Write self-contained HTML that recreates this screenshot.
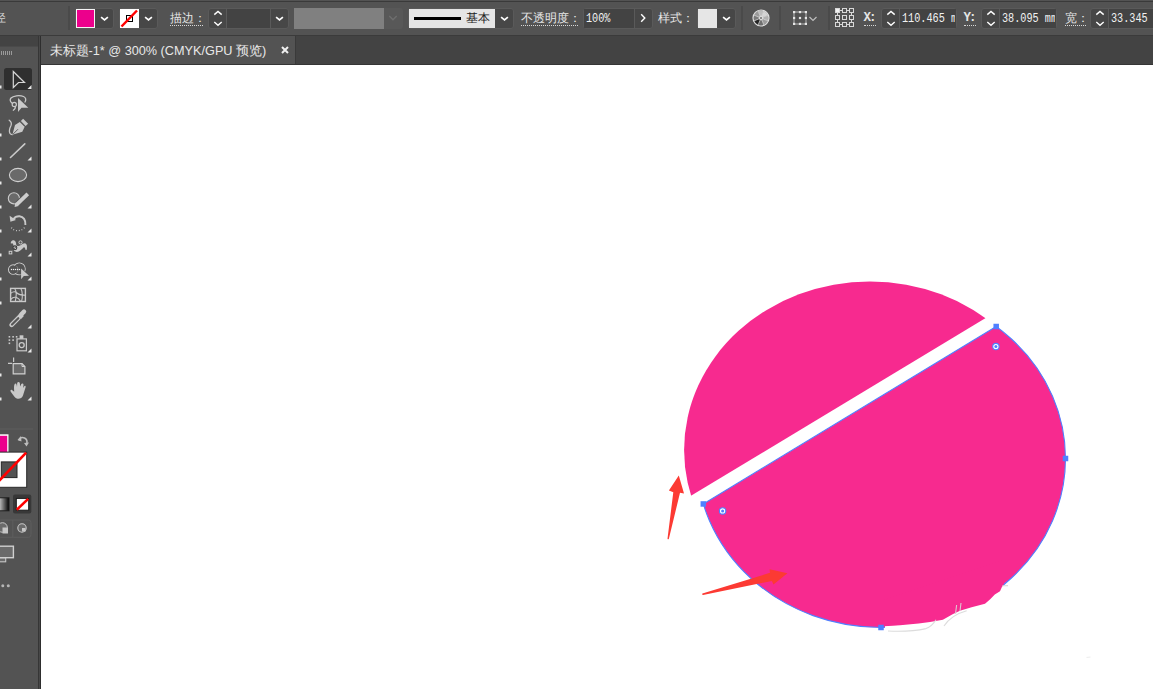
<!DOCTYPE html>
<html><head><meta charset="utf-8">
<style>
*{margin:0;padding:0;box-sizing:border-box}
html,body{width:1153px;height:689px;overflow:hidden;background:#535353;font-family:"Liberation Sans",sans-serif}
.a{position:absolute}
#top{left:0;top:0;width:1153px;height:35px;background:#535353}
#topdark{left:0;top:1px;width:1153px;height:1px;background:#3a3a3a}
#topline{left:0;top:35px;width:1153px;height:1px;background:#3b3b3b}
#tabbar{left:41px;top:36px;width:1112px;height:28px;background:#434343}
#tab{left:40px;top:36px;width:256px;height:28px;background:#535353;border-right:1px solid #3a3a3a}
#tool{left:0;top:36px;width:38px;height:653px;background:#535353}
#toolhead{left:0;top:36px;width:38px;height:11px;background:#434343;border-bottom:1px solid #4a4a4a}
#toolsep{left:38px;top:36px;width:3px;height:653px;background:linear-gradient(90deg,#363636 0,#363636 1px,#484848 1px,#484848 2px,#2e2e2e 2px)}
#canvas{left:41px;top:65px;width:1112px;height:624px;background:#fff}
#tabline{left:41px;top:64px;width:1112px;height:1px;background:#353535}
.sep{width:2px;height:24px;top:6px;background:#4a4a4a}
.box{background:#474747;border:1px solid #5a5a5a;border-radius:3px}
.lbl{color:#e6e6e6;font-size:12px;line-height:14px;top:11px;white-space:nowrap}
.ul{border-bottom:1px dotted #d8d8d8}
.txt{color:#f2f2f2;font-size:12.5px;transform:scaleX(0.815);transform-origin:0 0;white-space:nowrap;font-family:"Liberation Mono",monospace}
svg{position:absolute;overflow:visible}
</style></head><body>
<div id="top" class="a"></div>
<div id="topdark" class="a"></div>
<div id="topline" class="a"></div>
<div id="tabbar" class="a"></div>
<div id="tab" class="a"></div>
<div id="tool" class="a"></div>
<div id="toolhead" class="a"></div>
<div id="toolsep" class="a"></div>
<div id="canvas" class="a"></div>
<div id="tabline" class="a"></div>


<!-- toolbar -->
<svg style="left:0;top:0" width="41" height="689" viewBox="0 0 41 689">
<g fill="#9a9a9a">
<rect x="1" y="51" width="1" height="4"/><rect x="3" y="51" width="1" height="4"/><rect x="5" y="51" width="1" height="4"/><rect x="7" y="51" width="1" height="4"/><rect x="9" y="51" width="1" height="4"/><rect x="11" y="51" width="1" height="4"/>
</g>
<rect x="4" y="68" width="28" height="22" rx="2.5" fill="#2f2f2f"/>
<path d="M13.3,71.5 L24.5,82.5 L18.5,82.5 L13.3,87.5 Z" fill="none" stroke="#d6d6d6" stroke-width="1.2" stroke-linejoin="miter"/>
<g fill="#e8e8e8">
<path d="M31.5,85 L31.5,89 L27.5,89 Z"/>
<path d="M31.5,156.5 L31.5,160.5 L27.5,160.5 Z"/>
<path d="M31.5,204.5 L31.5,208.5 L27.5,208.5 Z"/>
<path d="M31.5,228.5 L31.5,232.5 L27.5,232.5 Z"/>
<path d="M31.5,252.5 L31.5,256.5 L27.5,256.5 Z"/>
<path d="M31.5,276.5 L31.5,280.5 L27.5,280.5 Z"/>
<path d="M31.5,324.5 L31.5,328.5 L27.5,328.5 Z"/>
<path d="M31.5,348.5 L31.5,352.5 L27.5,352.5 Z"/>
<path d="M31.5,396.5 L31.5,400.5 L27.5,400.5 Z"/>
<rect x="0" y="85.5" width="1.5" height="3"/><rect x="0" y="133.5" width="1.5" height="3"/><rect x="0" y="157.5" width="1.5" height="3"/><rect x="0" y="181.5" width="1.5" height="3"/><rect x="0" y="205.5" width="1.5" height="3"/><rect x="0" y="229.5" width="1.5" height="3"/><rect x="0" y="253.5" width="1.5" height="3"/><rect x="0" y="277.5" width="1.5" height="3"/><rect x="0" y="301.5" width="1.5" height="3"/><rect x="0" y="373.5" width="1.5" height="3"/><rect x="0" y="397.5" width="1.5" height="3"/>
</g>
<g fill="none" stroke="#c9c9c9" stroke-width="1.3" stroke-linecap="round">
<!-- lasso -->
<path d="M12.2,103.2 C10,101.5 9.6,99.5 11,98 C13,95.8 19.5,94.8 23.5,96.5 C26,97.6 26.3,100 25,102"/>
<circle cx="14.3" cy="104.4" r="2.1" stroke-width="1.2"/>
<path d="M15.2,106.4 C15.6,108 14.8,109.3 13.3,110.2"/>
<!-- pen curve -->
<path d="M9.2,120.2 C11,121.5 12,123 11,125.5 C9.5,128.5 8.6,131 10,133.4 C10.6,134.3 11.3,134.6 12.2,134.7"/>
<!-- line -->
<path d="M10.5,157.5 L24.8,143.8" stroke-width="1.6"/>
<!-- rotate -->
<path d="M13.5,219.2 C15,217 17.5,216.2 19.5,216.3 C23.5,216.6 25.8,220 25.4,225" stroke-width="1.9" stroke-linecap="butt"/>
<path d="M24.5,227.6 C22,230.4 18.5,231.3 15,230.3 C13,229.7 11.8,228.4 11,226.9" stroke-dasharray="0.9 1.9" stroke-width="1.3" stroke-linecap="butt"/>
<!-- puppet pin line -->
<!-- eyedropper tube -->

<!-- mesh -->
<rect x="10.6" y="288.4" width="14.8" height="13.1" stroke-width="1.4" stroke-linecap="butt"/>
<path d="M14.7,288.5 C16.5,291 16.5,296 15.3,301.3 M20.8,288.5 C22.5,291 22.8,297 21.6,301.3 M10.6,293.4 C13,291.5 15.5,291.5 17,293 C18.5,294.5 20.5,295 25.3,295.3 M10.6,299.5 C12.5,297.5 15,297 16.5,297.6 C18,298.2 19.5,299.5 20.5,301.3" stroke-width="1.1"/>
<!-- sprayer can -->
<rect x="17" y="338.9" width="9.4" height="11.9" stroke-width="1.2" stroke-linecap="butt"/>
<circle cx="21.7" cy="345.1" r="2.5" stroke-width="1.3"/>
<!-- artboard -->
<path d="M13.6,357.5 V362 M8,363.4 H12" stroke-width="1.2" stroke-linecap="butt"/>

</g>
<g fill="#c9c9c9">
<path d="M18,98 L28.3,107.8 L21.5,107.8 L18,112 Z"/>
<path d="M12.4,134.8 L15,125 L20.2,121.7 L24.8,126.4 L22.3,131.8 Z"/>
<path d="M20.9,121 L23.1,118.8 L28.1,123.8 L25.6,126.1 Z"/>
<path d="M9.6,215.8 L10.4,221.8 L16,220 Z"/>
<path d="M10.8,243.6 C10.5,241.3 12,240 13.6,240.2 C15.4,240.5 16.3,242.5 16.2,244.8 C17,246.3 18.8,246.3 20.5,245.3 C22.3,244.2 23.8,243.2 25.3,243.4 C27,243.7 27.3,246.5 26.8,249.8 L25.6,250 C25.2,248.3 24.7,247 23.8,247.3 C22,249.3 19.5,251.9 16.8,251.9 C14.6,251.9 13.2,250.6 13.4,248.3 C13.6,246.2 13.6,244.3 12.6,243.4 C12,243 11.4,243.4 10.8,243.6 Z"/>


<rect x="8.6" y="336" width="1.6" height="1.6"/><rect x="12.3" y="336" width="1.6" height="1.6"/><rect x="15.8" y="336" width="1.6" height="1.6"/>
<rect x="8.6" y="339.3" width="1.6" height="1.6"/><rect x="12.3" y="339.3" width="1.6" height="1.6"/>
<rect x="8.6" y="342.5" width="1.6" height="1.6"/>
<rect x="19.6" y="335.3" width="3.8" height="3.6"/>
<path d="M14,388 C14,385 14.6,383.5 15.5,383.5 C16.4,383.5 16.8,385 17,387 L17.2,383 C17.5,381.8 19.5,381.8 19.8,383 L20.2,386.5 L21.3,384 C21.8,383 23.5,383.3 23.5,384.5 L23.2,388 L24.2,386.3 C24.8,385.3 26,385.8 25.6,387.2 L23,395.5 C22,398 20,399 17.5,398.7 C15.5,398.5 14.5,397 13.5,395.5 L10.6,391.5 C10,390.5 11,389.5 12,390 L14.2,391.8 Z"/>
</g>
<path d="M13.2,363.6 H22 L24.9,366.5 V373.9 H13.2 Z" fill="#6a6a6a" stroke="#cfcfcf" stroke-width="1.2"/>
<path d="M22,363.6 V366.5 H24.9" fill="none" stroke="#cfcfcf" stroke-width="1"/>
<path d="M11.6,324.9 L18.8,317.7" stroke="#c9c9c9" stroke-width="4.6" stroke-linecap="round"/>
<path d="M12,324.5 L18.3,318.2" stroke="#575757" stroke-width="2.2" stroke-linecap="round"/>
<path d="M17.6,315.4 L20.4,312.6 L23.9,316.1 L21.1,318.9 Z" fill="#c9c9c9"/>
<path d="M21.4,314.2 L24,311.6" stroke="#c9c9c9" stroke-width="4.4" stroke-linecap="round"/>
<ellipse cx="18" cy="175" rx="8.6" ry="6.6" fill="#6a6a6a" stroke="#d0d0d0" stroke-width="1.1"/>
<circle cx="13.9" cy="198.3" r="5.6" fill="#6a6a6a" stroke="#cbcbcb" stroke-width="1.1"/>
<path d="M16.3,205 L27.8,193.8" stroke="#535353" stroke-width="5.8"/>
<path d="M16.6,204.7 L27.8,193.8" stroke="#cdcdcd" stroke-width="3.8"/>
<path d="M14.6,207 L15.2,202.6 L18.6,205.9 Z" fill="#cdcdcd"/>
<path d="M10.6,252.4 L20.4,242.6" stroke="#c9c9c9" stroke-width="1"/>
<path d="M11.5,251.5 L19.5,243.5" stroke="#444" stroke-width="0.8"/>
<g fill="#555" stroke="#cdcdcd" stroke-width="1">
<circle cx="20.5" cy="242.4" r="1.6"/>
<circle cx="14.9" cy="247.8" r="1.9" fill="#cdcdcd" stroke="#3a3a3a" stroke-width="1.1"/>
<rect x="9.2" y="251.3" width="2.6" height="2.6"/>
</g>
<path d="M13.6,249.1 L16.2,246.5" stroke="#3a3a3a" stroke-width="0.9"/>
<path d="M12.9,134.3 L18,129.2" stroke="#555" stroke-width="0.9"/>
<path d="M19.9,121.6 L24.9,126.6" stroke="#535353" stroke-width="0.9"/>
<circle cx="13.2" cy="269.6" r="4.7" fill="none" stroke="#c9c9c9" stroke-width="1.1"/>
<circle cx="19.3" cy="268.9" r="5.9" fill="none" stroke="#c9c9c9" stroke-width="1.1"/>
<circle cx="13.2" cy="269.6" r="4.15" fill="#535353"/>
<circle cx="19.3" cy="268.9" r="5.35" fill="#535353"/>
<path d="M16.6,266.2 A4.7,4.7 0 0 1 16.6,273" stroke="#8a8a8a" stroke-width="0.8" fill="none"/>
<g fill="#eee"><rect x="10.9" y="268.9" width="1.2" height="1.2"/><rect x="12.9" y="268.9" width="1.2" height="1.2"/><rect x="14.9" y="268.9" width="1.2" height="1.2"/><rect x="16.9" y="268.9" width="1.2" height="1.2"/><rect x="18.9" y="268.9" width="1.2" height="1.2"/></g>
<path d="M21.1,268.4 L29,275.8 L23.8,276 L21.1,279.3 Z" fill="#c9c9c9" stroke="#535353" stroke-width="1" paint-order="stroke"/>
<rect x="0" y="428.5" width="33" height="1" fill="#5e5e5e"/>
<!-- color area -->
<rect x="0" y="434.3" width="8.5" height="18" fill="#fff"/>
<rect x="0" y="435.8" width="7.2" height="16.5" fill="#ec008c"/>
<rect x="-1" y="452.1" width="27.7" height="35.2" fill="#fff" stroke="#2a2a2a" stroke-width="1"/>
<rect x="1.3" y="461.9" width="15.7" height="15.7" fill="#535353" stroke="#262626" stroke-width="1"/>
<path d="M-1,481 L26.2,452.6" stroke="#ff0000" stroke-width="2.6"/>
<path d="M19,440.5 C19.5,437.8 22,436.8 24.5,438 C26.5,439 27.3,441 26.8,443" fill="none" stroke="#bdbdbd" stroke-width="1.6"/>
<path d="M17.5,440 L21,436 L21.5,441.5 Z M24,443 L29,442.5 L26.5,446.5 Z" fill="#bdbdbd"/>
<defs><linearGradient id="gr" x1="0" x2="1"><stop offset="0" stop-color="#c8c8c8"/><stop offset="1" stop-color="#000"/></linearGradient></defs>
<rect x="-1" y="497.8" width="10" height="13" fill="url(#gr)" stroke="#1e1e1e" stroke-width="1"/>
<rect x="13" y="494.5" width="18.3" height="19" rx="2" fill="#383838"/>
<rect x="16.3" y="498.4" width="12.4" height="11.8" fill="#fff" stroke="#1a1a1a" stroke-width="1"/>
<path d="M16.8,509.7 L28.2,498.9" stroke="#ff0000" stroke-width="2.6"/>
<rect x="-2" y="520" width="33" height="17.3" rx="2.5" fill="none" stroke="#5e5e5e" stroke-width="1"/>
<rect x="12.3" y="520" width="1" height="17.3" fill="#5e5e5e"/>
<circle cx="2.5" cy="527.5" r="4.8" fill="#6a6a6a" stroke="#c6c6c6" stroke-width="1"/>
<rect x="2.5" y="527.5" width="5.5" height="6" fill="#c6c6c6"/>
<circle cx="22" cy="528" r="4.2" fill="#6a6a6a" stroke="#c6c6c6" stroke-width="1.1"/>
<rect x="22" y="528" width="3.5" height="3.5" fill="#c6c6c6"/>
<rect x="-2" y="557.7" width="7.7" height="4.1" fill="#6a6a6a" stroke="#c6c6c6" stroke-width="1.1"/>
<rect x="-1" y="546.2" width="14.4" height="11.5" fill="#6a6a6a" stroke="#cfcfcf" stroke-width="1.4"/>
<circle cx="2.8" cy="585.8" r="1.5" fill="#b5b5b5"/><circle cx="8.3" cy="585.8" r="1.5" fill="#b5b5b5"/>
</svg>
<!-- top bar content -->
<div class="a lbl" style="left:-6px;top:11px;color:#d0d0d0">径</div>
<div class="a sep" style="left:68px"></div>

<!-- fill -->
<div class="a box" style="left:75px;top:8px;width:39px;height:21px"></div>
<div class="a" style="left:76px;top:9px;width:19px;height:19px;background:#fff;border:1px solid #f4f4f4"></div>
<div class="a" style="left:77px;top:10px;width:17px;height:17px;background:#ec008c"></div>
<!-- stroke -->
<div class="a box" style="left:119px;top:8px;width:39px;height:21px"></div>
<div class="a" style="left:120px;top:9px;width:19px;height:19px;background:#fff"></div>
<svg style="left:120px;top:9px" width="19" height="19"><rect x="6.5" y="6.5" width="6" height="6" fill="none" stroke="#000" stroke-width="1"/><line x1="1.5" y1="17.5" x2="17" y2="1.5" stroke="#f00" stroke-width="2.5"/></svg>

<svg id="chev" width="0" height="0"><defs><path id="cv" d="M-2.9,-0.8 L0.5,2 L3.9,-0.8" fill="none" stroke="#fff" stroke-width="1.7"/></defs></svg>
<svg style="left:104px;top:18px" width="1" height="1"><use href="#cv"/></svg>
<svg style="left:148px;top:18px" width="1" height="1"><use href="#cv"/></svg>

<!-- stroke label -->
<div class="a lbl ul" style="left:170px;width:33px">描边：</div>
<!-- spinner -->
<div class="a box" style="left:208px;top:8px;width:81px;height:21px"></div>
<div class="a" style="left:226px;top:9px;width:1px;height:19px;background:#5a5a5a"></div>
<div class="a" style="left:227px;top:9px;width:43px;height:19px;background:#434343"></div>
<div class="a" style="left:270px;top:9px;width:1px;height:19px;background:#5a5a5a"></div>
<svg style="left:217.5px;top:18px" width="1" height="1"><path d="M-3.7,-3.4 L0,-6.6 L3.7,-3.4 M-3.7,4 L0,7.2 L3.7,4" fill="none" stroke="#fff" stroke-width="1.4"/></svg>
<svg style="left:279px;top:18px" width="1" height="1"><use href="#cv"/></svg>

<!-- gray bar -->
<div class="a" style="left:294px;top:8px;width:90px;height:21px;background:#808080"></div>
<div class="a" style="left:384px;top:8px;width:19px;height:21px;background:#585858;border-radius:0 3px 3px 0"></div>
<svg style="left:393px;top:18px" width="1" height="1"><path d="M-3.7,-2 L0,1.7 L3.7,-2" fill="none" stroke="#6e6e6e" stroke-width="1.4"/></svg>

<!-- profile -->
<div class="a box" style="left:408px;top:8px;width:106px;height:21px"></div>
<div class="a" style="left:409px;top:9px;width:86px;height:19px;background:#e5e5e5"></div>
<div class="a" style="left:414px;top:17px;width:47px;height:3px;background:#000"></div>
<div class="a" style="left:466px;top:11px;font-size:12px;line-height:14px;color:#222">基本</div>
<svg style="left:504px;top:18px" width="1" height="1"><use href="#cv"/></svg>

<!-- opacity -->
<div class="a lbl ul" style="left:521px;width:57px">不透明度：</div>
<div class="a box" style="left:583px;top:8px;width:70px;height:21px"></div>
<div class="a" style="left:584px;top:9px;width:50px;height:19px;background:#434343"></div>
<div class="a" style="left:634px;top:9px;width:1px;height:19px;background:#5a5a5a"></div>
<div class="a txt" style="left:586px;top:12.5px;line-height:12px">100%</div>
<svg style="left:643px;top:18px" width="1" height="1"><path d="M-1.8,-3.7 L1.8,0 L-1.8,3.7" fill="none" stroke="#fff" stroke-width="1.4"/></svg>

<!-- style -->
<div class="a lbl" style="left:658px">样式：</div>
<div class="a box" style="left:697px;top:8px;width:39px;height:21px"></div>
<div class="a" style="left:698px;top:9px;width:19px;height:19px;background:#e6e6e6"></div>
<svg style="left:726px;top:18px" width="1" height="1"><use href="#cv"/></svg>
<div class="a sep" style="left:741px"></div>

<!-- recolor -->
<svg style="left:761px;top:18px" width="1" height="1"><path d="M0,0 L-2.91,-7.02 A7.6,7.6 0 0 1 2.91,-7.02 Z" fill="#bcbcbc"/><path d="M0,0 L2.91,-7.02 A7.6,7.6 0 0 1 7.02,-2.91 Z" fill="#d4d4d4"/><path d="M0,0 L7.02,-2.91 A7.6,7.6 0 0 1 7.02,2.91 Z" fill="#b0b0b0"/><path d="M0,0 L7.02,2.91 A7.6,7.6 0 0 1 2.91,7.02 Z" fill="#9a9a9a"/><path d="M0,0 L2.91,7.02 A7.6,7.6 0 0 1 -2.91,7.02 Z" fill="#6e6e6e"/><path d="M0,0 L-2.91,7.02 A7.6,7.6 0 0 1 -7.02,2.91 Z" fill="#252525"/><path d="M0,0 L-7.02,2.91 A7.6,7.6 0 0 1 -7.02,-2.91 Z" fill="#7a7a7a"/><path d="M0,0 L-7.02,-2.91 A7.6,7.6 0 0 1 -2.91,-7.02 Z" fill="#9a9a9a"/><path d="M-0.61,-1.48 L-2.91,-7.02 M0.61,-1.48 L2.91,-7.02 M1.48,-0.61 L7.02,-2.91 M1.48,0.61 L7.02,2.91 M0.61,1.48 L2.91,7.02 M-0.61,1.48 L-2.91,7.02 M-1.48,0.61 L-7.02,2.91 M-1.48,-0.61 L-7.02,-2.91 " stroke="#e0e0e0" stroke-width="0.7" fill="none"/><circle r="8" fill="none" stroke="#dedede" stroke-width="1.2"/><circle r="1.8" fill="#8a8a8a" stroke="#e6e6e6" stroke-width="1"/></svg>
<div class="a sep" style="left:779px"></div>

<!-- align -->
<svg style="left:793px;top:11px" width="14" height="14"><rect x="1" y="1" width="12" height="12" fill="none" stroke="#cfcfcf" stroke-width="0.8"/><g fill="#e6e6e6"><rect x="0" y="0" width="2.2" height="2.2"/><rect x="11.8" y="0" width="2.2" height="2.2"/><rect x="0" y="11.8" width="2.2" height="2.2"/><rect x="11.8" y="11.8" width="2.2" height="2.2"/><rect x="5.9" y="0" width="2.2" height="2.2"/><rect x="5.9" y="11.8" width="2.2" height="2.2"/><rect x="0" y="5.9" width="2.2" height="2.2"/><rect x="11.8" y="5.9" width="2.2" height="2.2"/><rect x="5.9" y="5.9" width="2.2" height="2.2"/></g></svg>
<svg style="left:812.5px;top:18.5px" width="1" height="1"><path d="M-3.5,-2 L0,1.5 L3.5,-2" fill="none" stroke="#bdbdbd" stroke-width="1.2"/></svg>
<div class="a sep" style="left:828px"></div>

<!-- ref point -->
<svg style="left:835px;top:8px" width="20" height="20">
<g fill="none" stroke="#d8d8d8" stroke-width="1">
<rect x="0.5" y="0.5" width="4" height="4" fill="#f2f2f2"/><rect x="7.5" y="0.5" width="4" height="4"/><rect x="14.5" y="0.5" width="4" height="4"/>
<rect x="0.5" y="7.5" width="4" height="4"/><rect x="7.5" y="7.5" width="4" height="4"/><rect x="14.5" y="7.5" width="4" height="4"/>
<rect x="0.5" y="14.5" width="4" height="4"/><rect x="7.5" y="14.5" width="4" height="4"/><rect x="14.5" y="14.5" width="4" height="4"/>
<path d="M4.5,2.5h3M11.5,2.5h3M4.5,16.5h3M11.5,16.5h3M2.5,4.5v3M16.5,4.5v3M2.5,11.5v3M16.5,11.5v3"/>
</g></svg>

<!-- X -->
<div class="a lbl ul" style="left:863.5px;width:12px;font-family:'Liberation Mono',monospace;font-size:12.5px;letter-spacing:-2px;line-height:13px;top:11.5px;font-weight:bold">X:</div>
<div class="a box" style="left:881px;top:8px;width:76px;height:21px"></div>
<div class="a" style="left:899px;top:9px;width:1px;height:19px;background:#5a5a5a"></div>
<div class="a" style="left:900px;top:9px;width:56px;height:19px;background:#434343"></div>
<svg style="left:890.5px;top:18px" width="1" height="1"><path d="M-3.7,-3.4 L0,-6.6 L3.7,-3.4 M-3.7,4 L0,7.2 L3.7,4" fill="none" stroke="#fff" stroke-width="1.4"/></svg>
<div class="a" style="left:902px;top:8px;width:53px;height:20px;overflow:hidden"><div class="a txt" style="left:0;top:4.5px;line-height:12px">110.465 mm</div></div>

<!-- Y -->
<div class="a lbl ul" style="left:963.5px;width:12px;font-family:'Liberation Mono',monospace;font-size:12.5px;letter-spacing:-2px;line-height:13px;top:11.5px;font-weight:bold">Y:</div>
<div class="a box" style="left:981px;top:8px;width:76px;height:21px"></div>
<div class="a" style="left:999px;top:9px;width:1px;height:19px;background:#5a5a5a"></div>
<div class="a" style="left:1000px;top:9px;width:56px;height:19px;background:#434343"></div>
<svg style="left:990.5px;top:18px" width="1" height="1"><path d="M-3.7,-3.4 L0,-6.6 L3.7,-3.4 M-3.7,4 L0,7.2 L3.7,4" fill="none" stroke="#fff" stroke-width="1.4"/></svg>
<div class="a" style="left:1002px;top:8px;width:53px;height:20px;overflow:hidden"><div class="a txt" style="left:0;top:4.5px;line-height:12px">38.095 mm</div></div>

<!-- W -->
<div class="a lbl ul" style="left:1065px;width:21px">宽：</div>
<div class="a box" style="left:1090px;top:8px;width:80px;height:21px"></div>
<div class="a" style="left:1108px;top:9px;width:1px;height:19px;background:#5a5a5a"></div>
<div class="a" style="left:1109px;top:9px;width:60px;height:19px;background:#434343"></div>
<svg style="left:1099.5px;top:18px" width="1" height="1"><path d="M-3.7,-3.4 L0,-6.6 L3.7,-3.4 M-3.7,4 L0,7.2 L3.7,4" fill="none" stroke="#fff" stroke-width="1.4"/></svg>
<div class="a txt" style="left:1111px;top:12.5px;line-height:12px">33.345</div>

<!-- tab -->
<div class="a" style="left:49.5px;top:44px;font-size:12.7px;line-height:15px;color:#e8e8e8;white-space:nowrap">未标题-1* @ 300% (CMYK/GPU 预览)</div>
<svg style="left:285px;top:50px" width="1" height="1"><path d="M-3,-3 L3,3 M3,-3 L-3,3" stroke="#f0f0f0" stroke-width="2"/></svg>

<!-- artwork -->
<svg style="left:0;top:0" width="1153" height="689" viewBox="0 0 1153 689">
<defs>
<clipPath id="cu"><path d="M103.4,850.1 L1278.6,141.3 L1278.6,-500 L103.4,-500 Z" transform="translate(0.057,-0.034)"/></clipPath>
<clipPath id="cl"><path d="M118.1,858.5 L1289.3,148.9 L1289.3,1200 L118.1,1200 Z" transform="translate(-0.404,0.245)"/></clipPath>
</defs>
<ellipse cx="870" cy="450" rx="185.9" ry="168.5" fill="#f72a8f" clip-path="url(#cu)"/>
<ellipse cx="881" cy="458.5" rx="184.5" ry="169" fill="#f72a8f" stroke="#4f80ff" stroke-width="1.1" clip-path="url(#cl)"/>
<path d="M703.3,503.94 L996.19,326.49" stroke="#4f80ff" stroke-width="1.1"/>
<path fill="none" stroke="#fff" stroke-width="4" d="M885,627.5 A184.5,169 0 0 0 1002.5,585.8"/>
<path fill="#f72a8f" d="M884,626.3 L900,625.3 L918.6,623.4 L930,622 L942.9,619.8 L952.6,614.3 L960,610.8 L971.6,607.3 L985,603.8 L990.2,599.2 L994.8,594.5 L1000,591.3 L1001.8,587.3 L1004,584 L1004,560 L884,600 Z"/>
<g fill="none" stroke="#d9d9d9" stroke-width="1.1" opacity="0.9">
<path d="M888,631 C900,631.5 915,631 926,628.6 C930,627 934,623 936,619.7"/>
<path d="M944,626 C948,620 955,614 966.7,610.8"/>
<path d="M956.6,605 L955.5,614 M961,603 L960,611"/>
<path d="M1002.3,585.8 L1008,585.6"/>
<path d="M1086.5,657.5 L1090.5,657" stroke="#ebebeb"/>
</g>
<g fill="#4f80ff">
<rect x="700.55" y="501.2" width="5.5" height="5.5"/>
<rect x="993.45" y="323.75" width="5.5" height="5.5"/>
<rect x="1062.75" y="455.75" width="5.5" height="5.5"/>
<rect x="878.25" y="624.75" width="5.5" height="5.5"/>
</g>
<g fill="#fff" stroke="#4f80ff" stroke-width="1.1">
<circle cx="722.6" cy="510.9" r="3.2"/>
<circle cx="995.9" cy="346.6" r="3.2"/>
</g>
<g fill="#4f80ff"><circle cx="722.6" cy="510.9" r="1.5"/><circle cx="995.9" cy="346.6" r="1.5"/></g>
<g fill="#fc3a33">
<path d="M678.8,475.4 L684,493.4 L680,492.8 L668.8,539 Q668,539.8 667.5,538.8 L673.3,492.3 L668.9,490.5 Z"/>
<path d="M702.4,593.6 L770,572.8 L769.6,569.3 L787.4,573.2 L773.5,584.5 L771.8,581 L703,595 Q701.8,594.6 702.4,593.6 Z"/>
</g>
</svg>

</body></html>
